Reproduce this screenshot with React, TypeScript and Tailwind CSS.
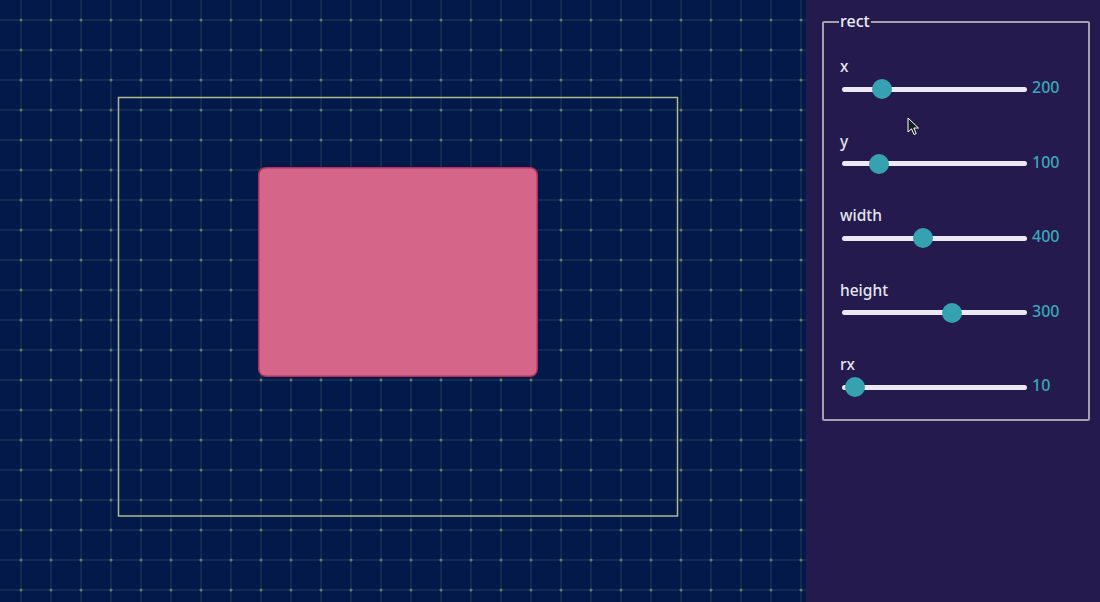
import React from "react";

const rows = [
  { label: "x", value: "200", pos: 40 },
  { label: "y", value: "100", pos: 37 },
  { label: "width", value: "400", pos: 81 },
  { label: "height", value: "300", pos: 110 },
  { label: "rx", value: "10", pos: 13 },
];

const xs = Array.from({ length: 27 }, (_, i) => 21 + i * 30);
const ys = Array.from({ length: 20 }, (_, i) => 20 + i * 30);

function Canvas() {
  return (
    <div className="h-[602px] w-[806px] shrink-0 bg-[#03194a]">
      <svg width="806" height="602" viewBox="0 0 806 602" className="block">
        <rect x="0" y="0" width="806" height="602" fill="#03194a" />
        {xs.map((x) => (
          <rect key={"v" + x} x={x - 1} y="0" width="2" height="602" fill="#112a51" />
        ))}
        {ys.map((y) => (
          <rect key={"h" + y} x="0" y={y - 1} width="806" height="2" fill="#112a51" />
        ))}
        {xs.map((x) =>
          ys.map((y) => <circle key={x + "-" + y} cx={x} cy={y} r="1.5" fill="#62805f" />)
        )}
        <rect x="118.5" y="97.5" width="559" height="418.5" fill="none" stroke="#aebb8c" strokeWidth="1.5" />
        <rect x="258.75" y="167.75" width="278.5" height="208.5" rx="7" fill="#d6658a" stroke="#b32e5a" strokeWidth="1.5" />
      </svg>
    </div>
  );
}

function Slider({ label, value, pos }: { label: string; value: string; pos: number }) {
  return (
    <div className="flex flex-col">
      <div className="mt-[2px] h-[20px] text-[15.5px] font-medium leading-[20px] text-[#e6e6ee]">{label}</div>
      <div className="mt-[3px] flex h-[20px] items-center">
        <div className="relative ml-[2px] h-[5px] w-[185px] rounded-full bg-[#ece8f4]">
          <div
            className="absolute top-1/2 h-[20px] w-[20px] -translate-x-1/2 -translate-y-1/2 rounded-full bg-[#36a2b1]"
            style={{ left: `${pos}px` }}
          />
        </div>
        <div className="ml-[5px] -mt-[4px] text-[16px] font-medium leading-[20px] text-[#3aa7b8]">{value}</div>
      </div>
    </div>
  );
}

export default function App() {
  return (
    <div
      className="relative flex h-[602px] w-[1100px] overflow-hidden"
      style={{ fontFamily: "'Noto Sans', Lato, sans-serif" }}
    >
      <Canvas />
      <div className="flex-1 bg-[#241a4d] pl-[16px] pr-[10px] pt-[21px]">
        <div className="relative h-[400px] w-[268px] rounded-[2px] border-2 border-[#a4a3ad] pl-[16px] pt-[31px]">
          <span className="absolute left-[15px] top-[-12px] bg-[#241a4d] px-[1px] text-[16px] font-medium leading-[20px] text-[#eeeef4]">
            rect
          </span>
          <div className="flex flex-col gap-[29.5px]">
            {rows.map((r) => (
              <Slider key={r.label} {...r} />
            ))}
          </div>
        </div>
      </div>
      <svg className="absolute left-[907px] top-[117px]" width="14" height="20" viewBox="0 0 14 20">
        <path d="M1 1 L1 15 L4.5 11.8 L7 17.5 L9.2 16.5 L6.8 11 L11.5 11 Z" fill="#0e1f1c" stroke="#ffffff" strokeWidth="1" strokeLinejoin="round" />
      </svg>
    </div>
  );
}
